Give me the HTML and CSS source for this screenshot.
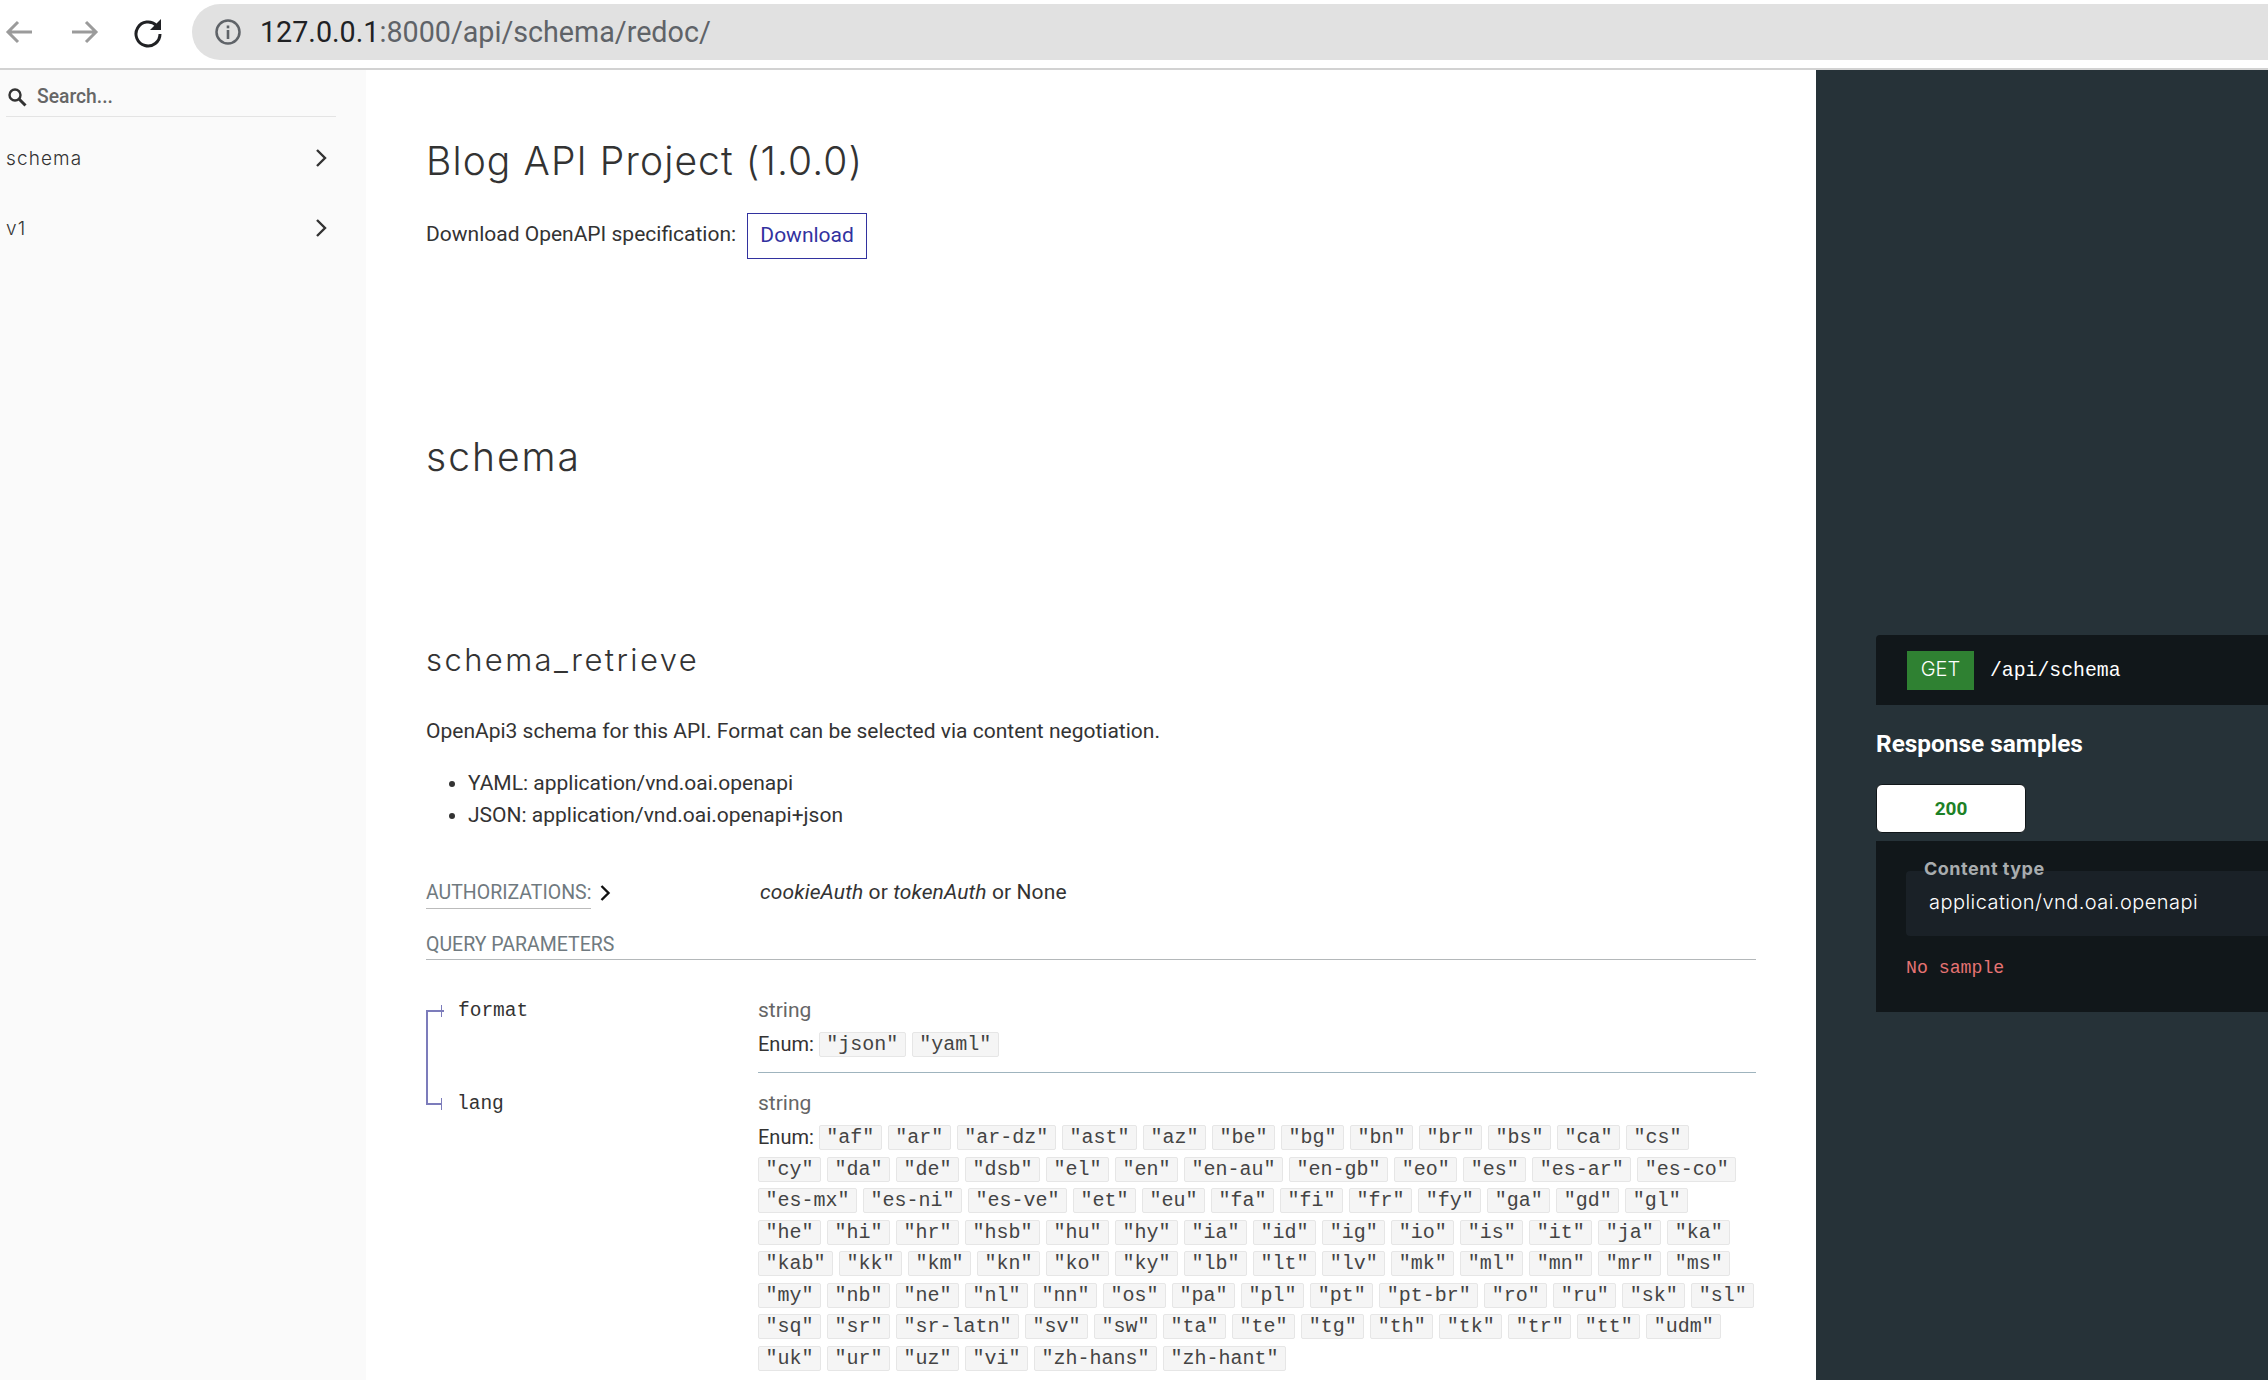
FILE: index.html
```html
<!DOCTYPE html>
<html lang="en">
<head>
    <meta charset="UTF-8">
    <title>Blog API Project - ReDoc</title>
    <link rel="stylesheet" href="styles.css">
</head>
<body>

    <!-- browser toolbar -->
    <div class="toolbar">
        <svg class="nav-icon back" width="32" height="32" viewBox="0 0 32 32"><path d="M28 16H5M14 6L4 16l10 10" fill="none" stroke="#9b9b9b" stroke-width="3"/></svg>
        <svg class="nav-icon forward" width="32" height="32" viewBox="0 0 32 32"><path d="M4 16h23M18 6l10 10-10 10" fill="none" stroke="#9b9b9b" stroke-width="3"/></svg>
        <svg class="nav-icon reload" width="32" height="32" viewBox="0 0 32 32"><path d="M24.5 9.5A12 12 0 1 0 28 18" fill="none" stroke="#202124" stroke-width="3"/><path d="M29 3v11H18z" fill="#202124"/></svg>
        <div class="omnibox">
            <svg width="28" height="28" viewBox="0 0 28 28"><circle cx="14" cy="14" r="11.5" fill="none" stroke="#5f6368" stroke-width="2.5"/><rect x="12.7" y="12" width="2.6" height="9" fill="#5f6368"/><rect x="12.7" y="7.5" width="2.6" height="2.8" fill="#5f6368"/></svg>
            <span class="url"><span class="host">127.0.0.1</span>:8000/api/schema/redoc/</span>
        </div>
    </div>

    <div class="page">
        <nav class="sidebar">
            <div class="search">
                <svg width="22" height="22" viewBox="0 0 22 22"><circle cx="9" cy="9" r="5.5" fill="none" stroke="#333" stroke-width="2.4"/><path d="M13 13l6.5 6.5" stroke="#333" stroke-width="3"/></svg>
                <span>Search...</span>
            </div>
            <div class="menu-item">
                <span>schema</span>
                <svg width="14" height="20" viewBox="0 0 14 20"><path d="M3 2l8 8-8 8" fill="none" stroke="#333" stroke-width="2.4"/></svg>
            </div>
            <div class="menu-item">
                <span>v1</span>
                <svg width="14" height="20" viewBox="0 0 14 20"><path d="M3 2l8 8-8 8" fill="none" stroke="#333" stroke-width="2.4"/></svg>
            </div>
        </nav>

        <main class="content">
            <h1>Blog API Project (1.0.0)</h1>
            <p class="download"><span>Download OpenAPI specification:</span> <a class="download-btn">Download</a></p>

            <h2>schema</h2>
            <h3>schema_retrieve</h3>
            <p class="desc">OpenApi3 schema for this API. Format can be selected via content negotiation.</p>
            <ul class="formats">
                <li>YAML: application/vnd.oai.openapi</li>
                <li>JSON: application/vnd.oai.openapi+json</li>
            </ul>

            <div class="auth">
                <div class="auth-label">
                    <span>AUTHORIZATIONS:</span>
                    <svg width="12" height="18" viewBox="0 0 12 18"><path d="M2.5 2l7 7-7 7" fill="none" stroke="#111" stroke-width="2.4"/></svg>
                </div>
                <div class="auth-value"><em>cookieAuth</em> or <em>tokenAuth</em> or None</div>
            </div>

            <div class="params-title">QUERY PARAMETERS</div>

            <div class="param first">
                <div class="param-name">format</div>
                <div class="param-detail">
                    <div class="param-type">string</div>
                    <div class="enums">
                        <span class="enum-label">Enum:</span>
                        <code>"json"</code><code>"yaml"</code>
                    </div>
                </div>
            </div>
            <div class="param last">
                <div class="param-name">lang</div>
                <div class="param-detail">
                    <div class="param-type">string</div>
                    <div class="enums">
                        <span class="enum-label">Enum:</span>
                        <code>"af"</code><code>"ar"</code><code>"ar-dz"</code><code>"ast"</code><code>"az"</code><code>"be"</code><code>"bg"</code><code>"bn"</code><code>"br"</code><code>"bs"</code><code>"ca"</code><code>"cs"</code>
                        <code>"cy"</code><code>"da"</code><code>"de"</code><code>"dsb"</code><code>"el"</code><code>"en"</code><code>"en-au"</code><code>"en-gb"</code><code>"eo"</code><code>"es"</code><code>"es-ar"</code><code>"es-co"</code>
                        <code>"es-mx"</code><code>"es-ni"</code><code>"es-ve"</code><code>"et"</code><code>"eu"</code><code>"fa"</code><code>"fi"</code><code>"fr"</code><code>"fy"</code><code>"ga"</code><code>"gd"</code><code>"gl"</code>
                        <code>"he"</code><code>"hi"</code><code>"hr"</code><code>"hsb"</code><code>"hu"</code><code>"hy"</code><code>"ia"</code><code>"id"</code><code>"ig"</code><code>"io"</code><code>"is"</code><code>"it"</code><code>"ja"</code><code>"ka"</code>
                        <code>"kab"</code><code>"kk"</code><code>"km"</code><code>"kn"</code><code>"ko"</code><code>"ky"</code><code>"lb"</code><code>"lt"</code><code>"lv"</code><code>"mk"</code><code>"ml"</code><code>"mn"</code><code>"mr"</code><code>"ms"</code>
                        <code>"my"</code><code>"nb"</code><code>"ne"</code><code>"nl"</code><code>"nn"</code><code>"os"</code><code>"pa"</code><code>"pl"</code><code>"pt"</code><code>"pt-br"</code><code>"ro"</code><code>"ru"</code><code>"sk"</code><code>"sl"</code>
                        <code>"sq"</code><code>"sr"</code><code>"sr-latn"</code><code>"sv"</code><code>"sw"</code><code>"ta"</code><code>"te"</code><code>"tg"</code><code>"th"</code><code>"tk"</code><code>"tr"</code><code>"tt"</code><code>"udm"</code>
                        <code>"uk"</code><code>"ur"</code><code>"uz"</code><code>"vi"</code><code>"zh-hans"</code><code>"zh-hant"</code>
                    </div>
                </div>
            </div>
        </main>

        <aside class="samples">
            <div class="endpoint">
                <span class="method">GET</span>
                <span class="path">/api/schema</span>
            </div>
            <h4>Response samples</h4>
            <div class="tab">200</div>
            <div class="sample-box">
                <div class="content-type">
                    <span class="ct-label">Content type</span>
                    <span class="ct-value">application/vnd.oai.openapi</span>
                </div>
                <div class="no-sample">No sample</div>
            </div>
        </aside>
    </div>

</body>
</html>
```

FILE: styles.css
```css
* {
    box-sizing: border-box;
}
html, body {
    margin: 0;
    height: 1380px;
    overflow: hidden;
}
body {
    font-family: Roboto, Arial, sans-serif;
    font-size: 21px;
    color: #333;
    background: #fff;
}

/* browser toolbar */
.toolbar {
    display: flex;
    align-items: center;
    height: 70px;
    padding-bottom: 4px;
    border-bottom: 2px solid #d2d2d2;
}
.nav-icon {
    flex: none;
}
.back { margin-left: 4px; }
.forward { margin-left: 32px; }
.reload { margin-left: 32px; }
.omnibox {
    flex: 1;
    display: flex;
    align-items: center;
    height: 56px;
    margin-left: 28px;
    padding-left: 22px;
    background: #e1e1e1;
    border-radius: 28px 0 0 28px;
}
.url {
    margin-left: 18px;
    font-size: 28.7px;
    color: #5f6368;
}
.host {
    color: #202124;
}

.page {
    display: flex;
    height: 1310px;
}

/* sidebar */
.sidebar {
    flex: none;
    width: 366px;
    background: #fafafa;
    font-family: Inter, sans-serif;
    font-weight: 300;
}
.search {
    display: flex;
    align-items: center;
    gap: 9px;
    width: 330px;
    height: 47px;
    margin: 0 0 6px 6px;
    padding-top: 7px;
    border-bottom: 1px solid #e4e4e4;
    font-family: Roboto, sans-serif;
    font-size: 19.3px;
    font-weight: 500;
    color: #666;
}
.menu-item {
    display: flex;
    align-items: center;
    justify-content: space-between;
    height: 70px;
    padding: 0 38px 0 6px;
    font-size: 19px;
    letter-spacing: 1.1px;
    color: #333;
}

/* middle column */
.content {
    flex: none;
    width: 1450px;
    padding: 0 60px;
}
h1, h2, h3, h4 {
    margin: 0;
    font-family: Inter, sans-serif;
    font-weight: 300;
    color: #333;
}
h1 {
    margin-top: 65px;
    font-size: 39px;
    letter-spacing: 1.1px;
    line-height: 52px;
}
.download {
    display: flex;
    gap: 11px;
    margin: 26px 0 0;
}
.download span {
    line-height: 43px;
}
.download-btn {
    display: block;
    width: 120px;
    height: 46px;
    line-height: 43px;
    text-align: center;
    color: #32329f;
    border: 1px solid #32329f;
}
h2 {
    margin-top: 172px;
    font-size: 39px;
    letter-spacing: 2px;
    line-height: 52px;
}
h3 {
    margin-top: 156px;
    font-size: 31px;
    letter-spacing: 2.4px;
    line-height: 42px;
}
.desc {
    margin: 35px 0 0;
    line-height: 30px;
}
.formats {
    margin: 22px 0 0;
    padding-left: 42px;
    line-height: 31.5px;
}
.auth {
    display: flex;
    align-items: flex-start;
    margin-top: 49px;
    height: 36px;
}
.auth-label {
    display: flex;
    align-items: flex-start;
    gap: 8px;
    width: 334px;
    font-size: 19.5px;
    color: #707a80;
}
.auth-label span {
    padding-bottom: 3px;
    border-bottom: 1px solid #bbb;
    line-height: 25px;
}
.auth-label svg {
    margin-top: 4px;
}
.auth-value {
    line-height: 24px;
    letter-spacing: 0.1px;
}
.params-title {
    margin-top: 11px;
    height: 33px;
    font-size: 19.5px;
    line-height: 36px;
    color: #707a80;
    border-bottom: 1px solid #b4b8ba;
}

/* parameter rows */
.param {
    position: relative;
    display: flex;
}
.param.first {
    margin-top: 50px;
    height: 94px;
    border-left: 2px solid #7c7cbb;
}
.param.last {
    margin-top: -17px;
}
.param.first::before,
.param.last::before {
    content: "";
    position: absolute;
    left: 0;
    top: 16px;
    width: 16px;
    height: 2px;
    background: #7c7cbb;
}
.param.first::before {
    top: 0;
}
/* little tick at the end of each tree branch */
.param.first::after,
.param.last::after {
    content: "";
    position: absolute;
    left: 15px;
    top: 11px;
    width: 1px;
    height: 12px;
    background: #7c7cbb;
}
.param.first::after {
    left: 13px;
    top: -5px;
}
.param-name {
    flex: none;
    width: 332px;
    padding-left: 31px;
    font-family: "Liberation Mono", monospace;
    font-size: 19.5px;
    line-height: 34px;
    color: #333;
}
.param.first .param-name {
    width: 330px;
    padding-left: 30px;
    margin-top: -16px;
}
.param-detail {
    flex: 1;
}
.param.first .param-detail {
    margin-top: -16px;
    border-bottom: 1px solid #9fb4be;
    height: 79px;
}
.param-type {
    line-height: 33px;
    color: #666;
}
.enums {
    display: flex;
    flex-wrap: wrap;
    align-items: center;
    gap: 6.5px 6px;
    margin-top: 5px;
}
.enum-label {
    margin-right: -1px;
    font-size: 20px;
    line-height: 25px;
}
code {
    display: block;
    height: 25px;
    padding: 0 6.5px;
    font-family: "Liberation Mono", monospace;
    font-size: 20px;
    line-height: 24px;
    color: #444;
    background: #f5f5f5;
    border: 1px solid #e6e6e6;
    border-radius: 2px;
}

/* right panel */
.samples {
    flex: 1;
    padding: 565px 0 0 60px;
    background: #263238;
}
.endpoint {
    display: flex;
    align-items: center;
    gap: 16px;
    height: 70px;
    padding-left: 31px;
    background: #11171a;
    border-top-left-radius: 4px;
}
.method {
    width: 67px;
    height: 39px;
    line-height: 36px;
    text-align: center;
    font-family: Inter, sans-serif;
    font-size: 20px;
    font-weight: 300;
    color: #fff;
    background: #2f8132;
}
.path {
    padding-top: 2px;
    font-family: "Liberation Mono", monospace;
    font-size: 19.8px;
    color: #fff;
}
h4 {
    margin-top: 22px;
    font-family: Roboto, sans-serif;
    font-size: 24.4px;
    font-weight: 700;
    line-height: 34px;
    color: #fff;
}
.tab {
    width: 150px;
    height: 49px;
    margin-top: 23px;
    line-height: 47px;
    text-align: center;
    font-size: 19px;
    font-weight: 700;
    color: #1d8127;
    background: #fff;
    border: 1px solid #11171a;
    border-radius: 6px;
}
.sample-box {
    height: 171px;
    margin-top: 8px;
    padding: 30px 0 0 30px;
    background: #11171a;
}
.content-type {
    position: relative;
    height: 65px;
    padding: 19px 0 0 23px;
    background: #1a2127;
    border-radius: 4px 0 0 4px;
}
.ct-label {
    position: absolute;
    left: 18px;
    top: -13px;
    font-family: Inter, sans-serif;
    font-size: 18px;
    font-weight: 700;
    letter-spacing: 0.5px;
    color: #a8acae;
}
.ct-value {
    font-family: Inter, sans-serif;
    font-size: 20px;
    font-weight: 300;
    letter-spacing: 0.45px;
    color: #fff;
}
.no-sample {
    margin-top: 22px;
    font-family: "Liberation Mono", monospace;
    font-size: 18.2px;
    color: #e57373;
}
```
